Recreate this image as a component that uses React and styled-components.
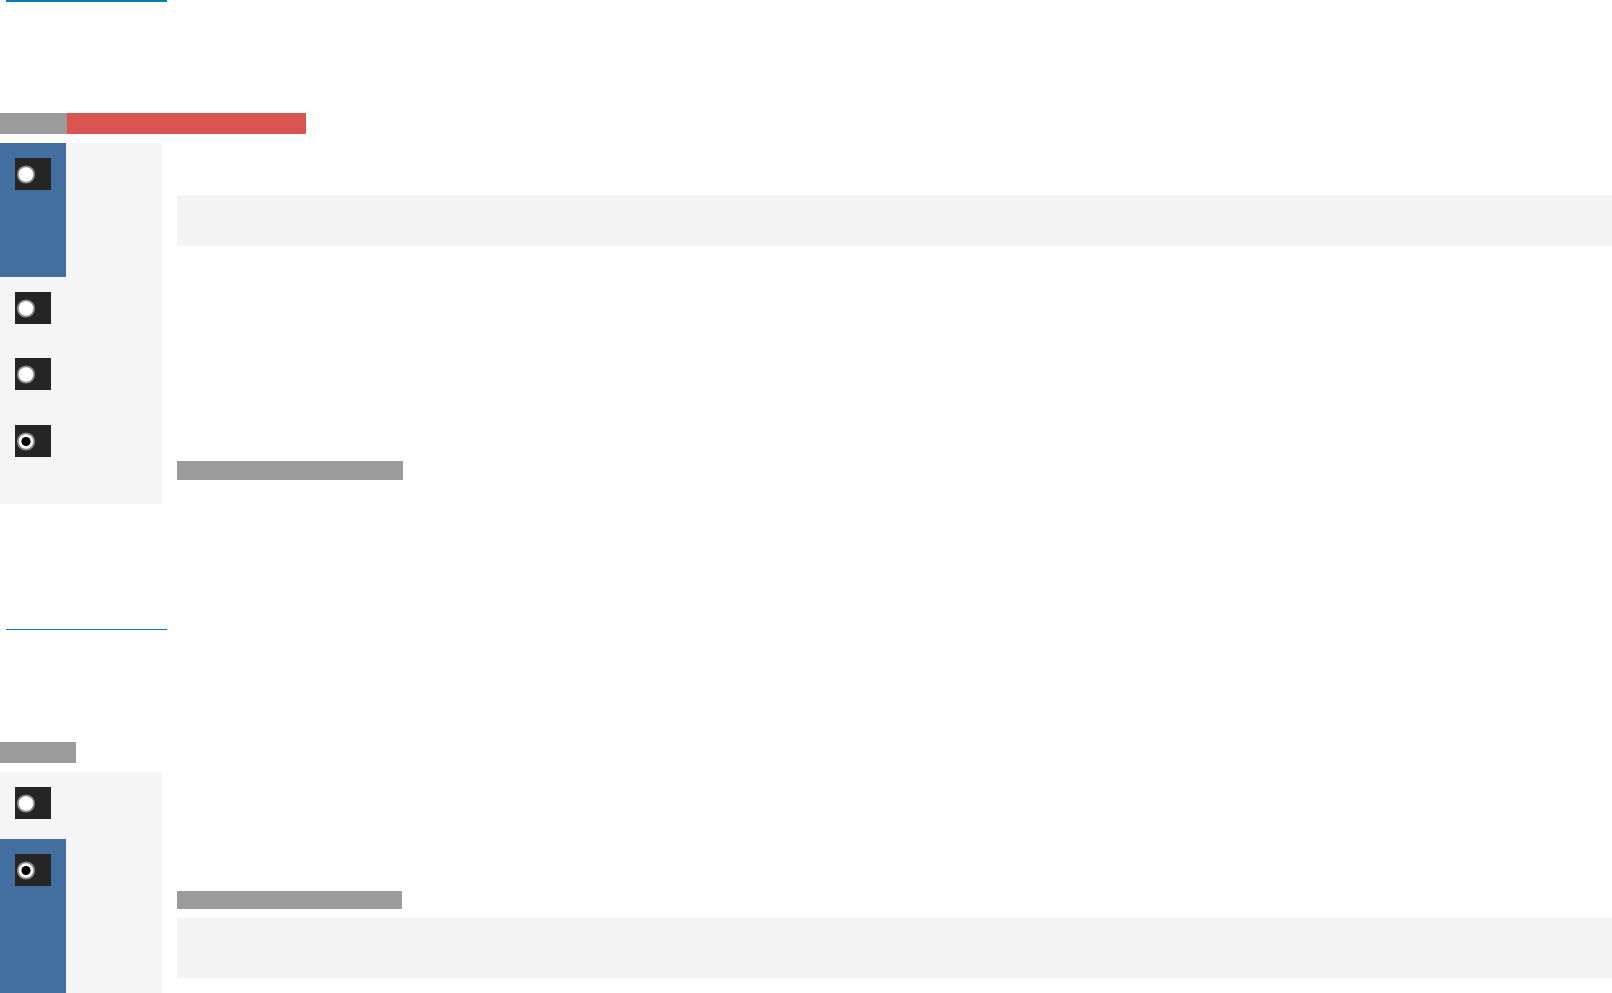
import React from "react";
import styled, { createGlobalStyle } from "styled-components";

const GlobalStyle = createGlobalStyle`
	html, body {
		margin: 0;
		padding: 0;
		background: #fff;
		font-family: "Liberation Sans", Arial, sans-serif;
	}
`;

const Page = styled.div`
	display: flex;
	flex-direction: column;
	width: 1612px;
	overflow: hidden;
`;

const Section = styled.section`
	display: flex;
	flex-direction: column;
	margin-bottom: ${(props) => props.gapAfter || 0}px;
`;

const LinkLine = styled.a`
	display: block;
	margin-left: 6px;
	width: 161px;
	height: ${(props) => props.thick}px;
	background: #0a7ab9;
`;

const TabBar = styled.div`
	display: flex;
	height: 21px;
	margin-top: ${(props) => props.offset}px;
`;

const Tab = styled.div`
	width: ${(props) => props.w}px;
	background: ${(props) => (props.danger ? "#db5550" : "#9b9b9b")};
`;

const Panel = styled.div`
	display: flex;
	margin-top: 9px;
	height: ${(props) => props.h}px;
`;

const Sidebar = styled.nav`
	display: flex;
	flex-direction: column;
	width: 162px;
	flex-shrink: 0;
	background: #f5f5f5;
`;

const NavItem = styled.div`
	width: 66px;
	height: ${(props) => props.h}px;
	flex-shrink: 0;
	box-sizing: border-box;
	padding: 15px 0 0 15px;
	background: ${(props) => (props.active ? "#426f9f" : "transparent")};
`;

const IconBox = styled.div`
	width: 36px;
	height: 32px;
	background: #252525;
	display: flex;
`;

const Content = styled.div`
	flex: 1;
	margin-left: 15px;
	display: flex;
	flex-direction: column;
`;

const Block = styled.div`
	height: ${(props) => props.h}px;
	margin-top: ${(props) => props.top}px;
	background: #f4f4f4;
`;

const Bar = styled.div`
	width: ${(props) => props.w}px;
	height: ${(props) => props.h}px;
	margin-top: ${(props) => props.top}px;
	background: #9b9b9b;
`;

const Radio = ({ checked }) => (
	<svg width="36" height="32" viewBox="0 0 36 32">
		<circle cx="11" cy="16.5" r="8.2" fill="#fff" stroke="#8a8a8a" strokeWidth="1.8" />
		{checked && <circle cx="11" cy="16.5" r="4.6" fill="#000" />}
	</svg>
);

const Nav = ({ items }) => (
	<Sidebar>
		{items.map((it, i) => (
			<NavItem key={i} active={it.active} h={it.h}>
				<IconBox>
					<Radio checked={it.checked} />
				</IconBox>
			</NavItem>
		))}
	</Sidebar>
);

export default function App() {
	return (
		<Page>
			<GlobalStyle />
			<Section gapAfter={125}>
				<LinkLine href="#" thick={2} />
				<TabBar offset={111}>
					<Tab w={67} />
					<Tab w={239} danger />
				</TabBar>
				<Panel h={361}>
					<Nav
						items={[
							{ active: true, h: 134 },
							{ h: 66 },
							{ h: 67 },
							{ h: 67, checked: true },
						]}
					/>
					<Content>
						<Block top={52} h={51} />
						<Bar top={215} w={226} h={19} />
					</Content>
				</Panel>
			</Section>
			<Section>
				<LinkLine href="#" thick={1} />
				<TabBar offset={112}>
					<Tab w={76} />
				</TabBar>
				<Panel h={260}>
					<Nav
						items={[
							{ h: 67 },
							{ active: true, h: 193, checked: true },
						]}
					/>
					<Content>
						<Bar top={119} w={225} h={18} />
						<Block top={9} h={60} />
					</Content>
				</Panel>
			</Section>
		</Page>
	);
}
